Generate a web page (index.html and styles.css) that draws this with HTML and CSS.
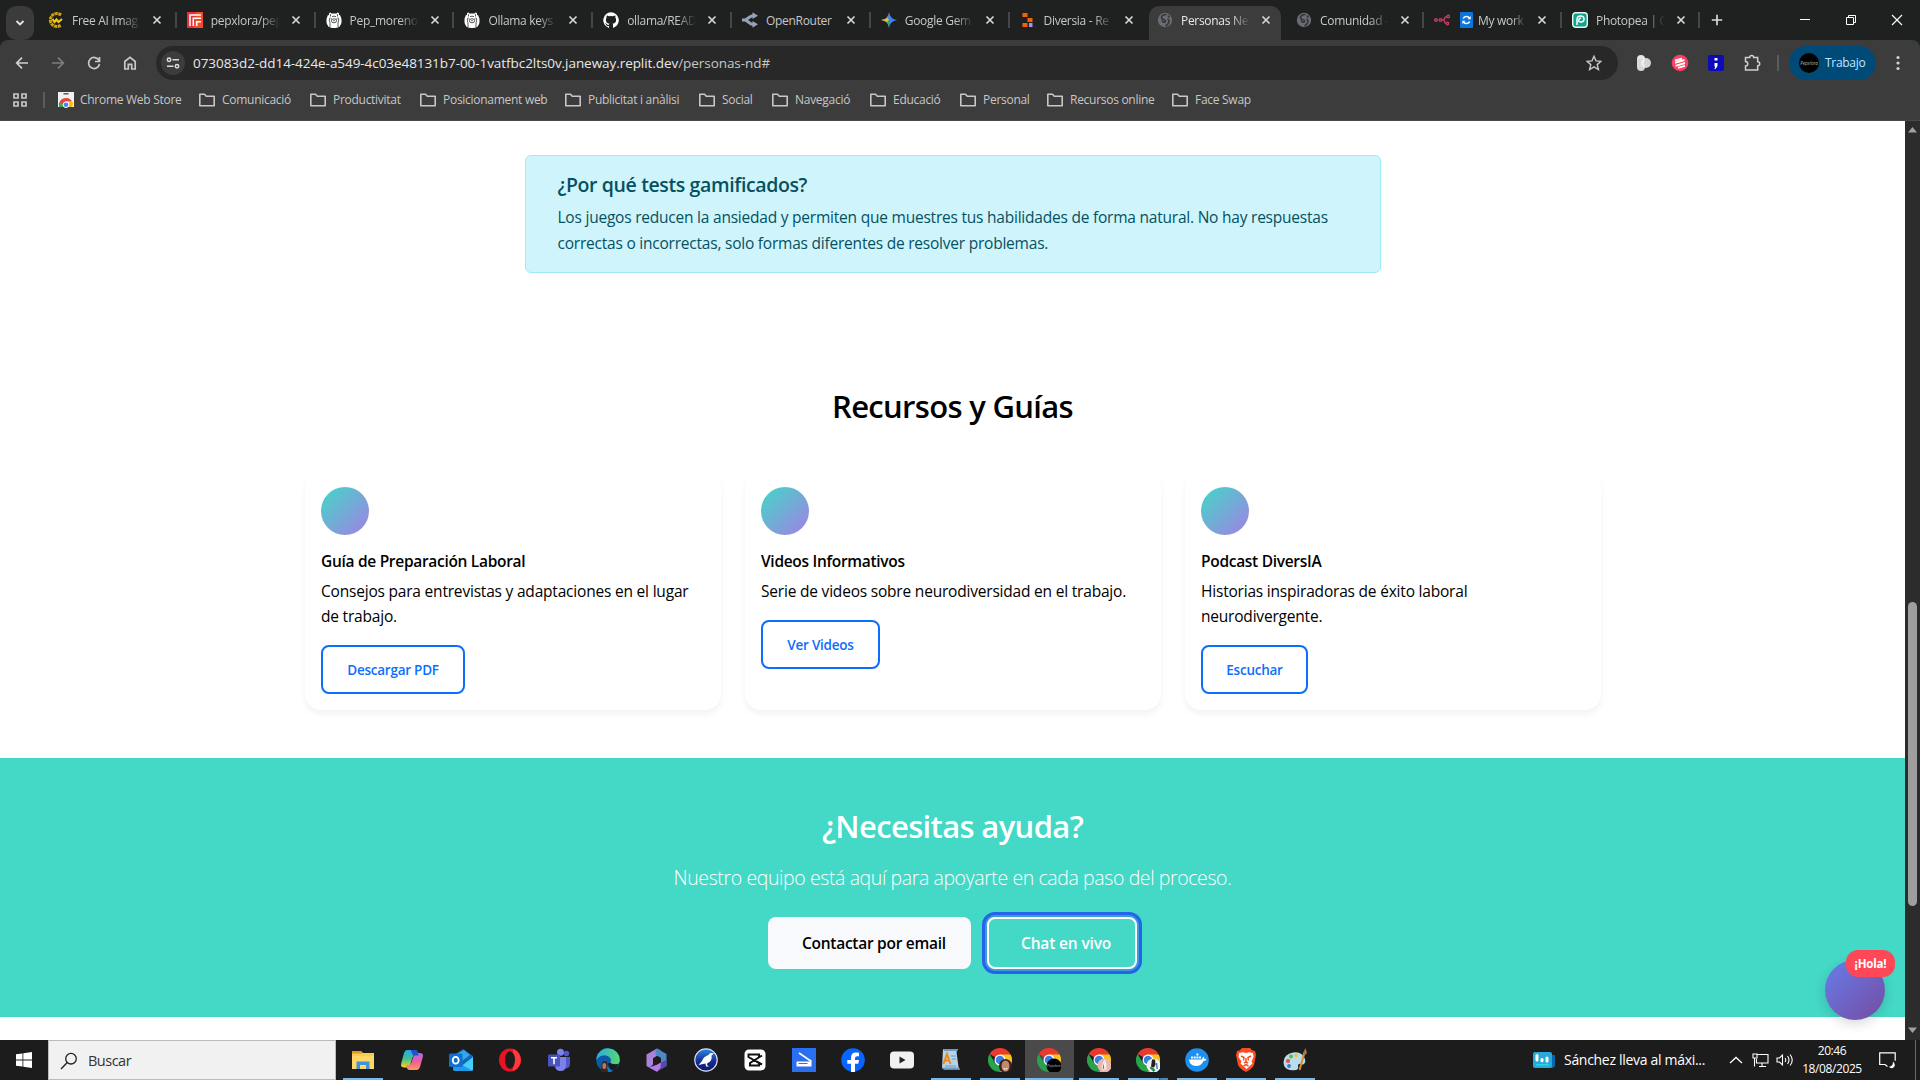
FILE: index.html
```html
<!DOCTYPE html>
<html lang="es">
<head>
<meta charset="utf-8">
<title>Personas Neurodivergentes</title>
<link rel="stylesheet" href="styles.css">
</head>
<body>
<svg class="defs" width="0" height="0" aria-hidden="true">
  <defs>
    <linearGradient id="cop" x1="0" y1="0" x2="0" y2="1"><stop offset="0" stop-color="#28a8f4"/><stop offset=".5" stop-color="#3fc28a"/><stop offset="1" stop-color="#ffd02d"/></linearGradient>
    <linearGradient id="cop2" x1="0" y1="0" x2="0" y2="1"><stop offset="0" stop-color="#a86bf0"/><stop offset=".5" stop-color="#ee5c9a"/><stop offset="1" stop-color="#ff9a5a"/></linearGradient>
    <linearGradient id="edge" x1="0" y1="0" x2="1" y2="0"><stop offset="0" stop-color="#2aa9e8"/><stop offset="1" stop-color="#57d96b"/></linearGradient>
    <linearGradient id="bird" x1="0" y1="0" x2="0" y2="1"><stop offset="0" stop-color="#2f86e0"/><stop offset=".6" stop-color="#14288f"/><stop offset="1" stop-color="#0d1c70"/></linearGradient>
    <linearGradient id="photo" x1="0" y1="0" x2="1" y2="1"><stop offset="0" stop-color="#ea4335"/><stop offset=".4" stop-color="#4285f4"/><stop offset="1" stop-color="#3a7cf0"/></linearGradient>
  </defs>
  <symbol id="x" viewBox="0 0 16 16"><path d="M4.500 4.500l7 7M11.500 4.500l-7 7" stroke="#d5d7d6" stroke-width="1.700" fill="none"/></symbol>
  <symbol id="folder" viewBox="0 0 18 16"><path d="M1.800 2.300h4.700l1.800 2h7.900v9.400H1.800z" fill="none" stroke="#c7c7c7" stroke-width="1.600" stroke-linejoin="round"/></symbol>
  <symbol id="globe" viewBox="0 0 16 16"><circle cx="8" cy="8" r="7.200" fill="#696c73"/><path d="M9.500 2.500c-3 0-5 1.500-5 3.500s4 1 4 3-3 1-3.500-.5M10.500 7c2 1 2 3 0 5.500L8.500 14M11 3.500l1.500 2" stroke="#35373b" stroke-width="1.700" fill="none"/></symbol>
  <symbol id="llama" viewBox="0 0 16 16"><rect x=".5" y="1.500" width="15" height="14.500" rx="6" fill="#fff"/><path d="M3 5V1.500Q4.500-.8 6 2.500h4q1.500-3.300 3-1V5" fill="#fff"/><path d="M4.500 4.500V2.200M11.500 4.500V2.200M4 5.500Q2.500 8 4 11v4M12 5.500q1.500 2.500 0 5.500v4M6 4.700q2-1 4 0" stroke="#333" stroke-width=".8" fill="none"/><ellipse cx="8" cy="8.800" rx="2.600" ry="2" fill="none" stroke="#333" stroke-width=".8"/><path d="M4.700 7h1M10.300 7h1M7.400 8.700h1.200" stroke="#222" stroke-width="1"/></symbol>
  <symbol id="chrome" viewBox="0 0 24 24"><path d="M12 12L1.600 6A12 12 0 0 1 22.400 6z" fill="#ea3a2e"/><path d="M12 12v12A12 12 0 0 1 1.600 6l5.500 9z" fill="#2aa24c"/><path d="M12 12L7 15l5 9z" fill="#2aa24c"/><path d="M12 6.500h10.700A12 12 0 0 1 12 24l4.800-9.200z" fill="#fcc31e"/><circle cx="12" cy="12" r="5.500" fill="#fff"/><circle cx="12" cy="12" r="4.300" fill="#3b7de8"/></symbol>
</svg>

<header class="browser">
  <div class="tabs">
    <button class="tab-search"><svg width="10" height="10" viewBox="0 0 10 10"><path d="M1.500 3l3.500 3.500L8.500 3" fill="none" stroke="#e4e4e4" stroke-width="1.900"/></svg></button>
    <div class="tab"><svg class="fav" viewBox="0 0 16 16"><path d="M13 3A6.500 6.500 0 1 0 13 13" fill="none" stroke="#cfa10d" stroke-width="3" stroke-dasharray="3 .6"/><path d="M4.500 7l2 3 2-2.500 2 2.500 3.500-3" fill="none" stroke="#f5c417" stroke-width="2.200"/></svg><span class="title">Free AI Imag</span><svg class="close"><use href="#x"/></svg></div>
    <div class="tab"><svg class="fav" viewBox="0 0 16 16"><path d="M0 0h16v16H0z" fill="#ee2f38"/><path d="M9 0h7v16H7z" fill="#f75b25" opacity=".65"/><path d="M3 14V3h11M6.300 14V6.300H14M9.700 14V9.700H14" fill="none" stroke="#fff" stroke-width="1.500"/></svg><span class="title">pepxlora/pep</span><svg class="close"><use href="#x"/></svg></div>
    <div class="tab"><svg class="fav"><use href="#llama"/></svg><span class="title">Pep_moreno/</span><svg class="close"><use href="#x"/></svg></div>
    <div class="tab"><svg class="fav"><use href="#llama"/></svg><span class="title">Ollama keys ·</span><svg class="close"><use href="#x"/></svg></div>
    <div class="tab"><svg class="fav" viewBox="0 0 16 16"><path fill="#fff" d="M8 .3a8 8 0 0 0-2.500 15.500c.4.100.5-.2.500-.4v-1.500c-2.200.5-2.700-1-2.700-1-.4-.9-.9-1.200-.9-1.200-.7-.5.100-.5.100-.5.800.100 1.200.8 1.200.8.700 1.200 1.900.9 2.300.7.100-.5.300-.9.500-1.100-1.800-.2-3.600-.9-3.600-3.900 0-.9.300-1.600.8-2.100-.1-.2-.4-1 .1-2.100 0 0 .7-.2 2.200.8a7.700 7.700 0 0 1 4 0c1.500-1 2.200-.8 2.200-.8.400 1.100.2 1.900.1 2.100.5.600.8 1.300.8 2.100 0 3.100-1.900 3.700-3.600 3.900.3.300.5.800.5 1.500v2.300c0 .2.100.5.600.4A8 8 0 0 0 8 .3z"/></svg><span class="title">ollama/READ</span><svg class="close"><use href="#x"/></svg></div>
    <div class="tab"><svg class="fav" viewBox="0 0 16 16"><path d="M0 8h2.500C6 8 7 3.700 11 3.700M2.500 8C6 8 7 12.300 11 12.300" fill="none" stroke="#94a3b8" stroke-width="3"/><path d="M10.500.3l5.500 3.400-5.500 3.400zM10.500 8.900l5.500 3.400-5.500 3.400z" fill="#94a3b8"/></svg><span class="title solid">OpenRouter</span><svg class="close"><use href="#x"/></svg></div>
    <div class="tab"><svg class="fav" viewBox="0 0 16 16"><path d="M8 0Q9 7 16 8 9 9 8 16 7 9 0 8 7 7 8 0z" fill="url(#photo)"/><path d="M0 8q5-.7 6.500-2.500L8 8l-1.500 2.500Q5 8.700 0 8z" fill="#f6bd18"/><path d="M8 16q-.5-4-2-5.800L8 8z" fill="#2fae58"/></svg><span class="title">Google Gem</span><svg class="close"><use href="#x"/></svg></div>
    <div class="tab no-sep"><svg class="fav" viewBox="0 0 16 16"><path d="M2.500 1h5v4h-5zM2.500 11h5v4h-5zM7.500 6h5v4h-5z" fill="#f26207"/><path d="M9 11h3.500v4H9z" fill="#b18cf5"/></svg><span class="title">Diversia - Re</span><svg class="close"><use href="#x"/></svg></div>
    <div class="tab active no-sep"><svg class="fav"><use href="#globe"/></svg><span class="title">Personas Ne</span><svg class="close"><use href="#x"/></svg></div>
    <div class="tab late"><svg class="fav"><use href="#globe"/></svg><span class="title">Comunidad -</span><svg class="close"><use href="#x"/></svg></div>
    <div class="tab late two-fav"><svg class="fav" viewBox="0 0 16 16"><g fill="none" stroke="#c23b5e" stroke-width="1.400"><circle cx="2" cy="8" r="1.300"/><circle cx="6.500" cy="8" r="1.300"/><path d="M8 8h2q1-3.500 3-3.500M10 8q1 3.500 2 3.500"/><circle cx="14.200" cy="4.500" r="1.200"/><circle cx="13.500" cy="11.500" r="1.200"/></g></svg><svg class="fav" viewBox="0 0 16 16"><rect width="13" height="16" x="2" rx="1" fill="#0b74dd"/><path d="M5.200 6.500A3.700 3.700 0 0 1 11.500 6M11.800 9.500A3.700 3.700 0 0 1 5.500 10" fill="none" stroke="#fff" stroke-width="1.600"/><path d="M12.700 4v3.300H9.500zM4.300 12V8.700h3.200z" fill="#fff"/></svg><span class="title">My work</span><svg class="close"><use href="#x"/></svg></div>
    <div class="tab late"><svg class="fav" viewBox="0 0 16 16"><rect x=".7" y=".7" width="14.600" height="14.600" rx="3" fill="#0fa58c" stroke="#e9f5f2" stroke-width="1.400"/><path d="M5 13V7.500Q5 4 8.500 4T12 7t-3 3-2.200-2.200T9 6.500" fill="none" stroke="#fff" stroke-width="1.500"/></svg><span class="title">Photopea | C</span><svg class="close"><use href="#x"/></svg></div>
    <svg class="new-tab" viewBox="0 0 16 16"><path d="M8 2.800v10.400M2.800 8h10.400" stroke="#d8dad9" stroke-width="1.700"/></svg>
    <div class="window-buttons">
      <svg viewBox="0 0 12 12"><path d="M1 5.500h10" stroke="#fff"/></svg>
      <svg viewBox="0 0 12 12"><path d="M1.500 3.500h7v7h-7zM3.500 3V1.500h7v7H9" fill="none" stroke="#fff"/></svg>
      <svg viewBox="0 0 12 12"><path d="M1 1l10 10M11 1L1 11" stroke="#fff" stroke-width="1.100"/></svg>
    </div>
  </div>
  <div class="toolbar">
    <div class="nav">
      <svg viewBox="0 0 16 16"><path d="M14 8H3M8 2.700L2.700 8 8 13.300" stroke="#d0d0d0"/></svg>
      <svg viewBox="0 0 16 16"><path d="M2 8h11M8 2.700L13.300 8 8 13.300" stroke="#7d7d7d"/></svg>
      <svg viewBox="0 0 16 16"><path d="M13 5.500A5.500 5.500 0 1 0 13.500 9M13.500 2v4.500H9" stroke="#c8c8c8"/></svg>
      <svg viewBox="0 0 16 16"><path d="M2.800 14V6.500L8 2.300l5.200 4.200V14H9.700V9.300H6.300V14z" stroke="#c8c8c8"/></svg>
    </div>
    <div class="omnibox">
      <span class="site"><svg width="14" height="14" viewBox="0 0 14 14"><g fill="none" stroke="#dcdcdc" stroke-width="1.500"><circle cx="3" cy="3.700" r="1.700"/><path d="M6.500 3.700H13M1 10.300h6.500"/><circle cx="11" cy="10.300" r="1.700"/></g></svg></span>
      <span class="url">073083d2-dd14-424e-a549-4c03e48131b7-00-1vatfbc2lts0v.janeway.replit.dev<i>/personas-nd#</i></span>
      <svg class="star" viewBox="0 0 16 16"><path d="M8 1.300l2 4.600 5 .4-3.800 3.300 1.200 4.900L8 11.900l-4.400 2.600 1.200-4.900L1 6.300l5-.4z" fill="none" stroke="#c8c8c8" stroke-width="1.400"/></svg>
    </div>
    <div class="extensions">
      <svg viewBox="0 0 18 18"><circle cx="6" cy="5" r="4" fill="#e6e6e6"/><circle cx="6" cy="13" r="4" fill="#d5d5d5"/><path d="M2 5h7v8H2z" fill="#dadada"/><circle cx="11" cy="9" r="5" fill="#efefef" opacity=".85"/></svg>
      <svg viewBox="0 0 18 18"><circle cx="9" cy="9" r="8.300" fill="#fb3f61"/><path d="M4 6.500l7-1.800M4 8.800L13.500 6M4.500 11.800L14 9M7 13.800l7-2" stroke="#fff" stroke-width="1.900"/></svg>
      <svg viewBox="0 0 18 18"><rect x="1" y="1" width="16" height="16" rx="2" fill="#0b0bba"/><path d="M7.500 4h3v2.500h-3zM7.500 9h3v3l-2 3h-1l.7-2.500h-.7z" fill="#fff"/></svg>
      <svg viewBox="0 0 18 18"><path d="M2.500 3.500h4.200a2 2 0 0 1 4 0h4v4.200a2 2 0 0 1 0 4v4.300H2.500v-4a2.200 2.200 0 0 0 0-4.500z" fill="none" stroke="#d0d0d0" stroke-width="1.500"/></svg>
    </div>
    <span class="bar"></span>
    <div class="profile"><span class="avatar">Pepxlora</span>Trabajo</div>
    <svg class="menu" viewBox="0 0 4 16"><g fill="#d2d2d2"><circle cx="2" cy="2.500" r="1.600"/><circle cx="2" cy="8" r="1.600"/><circle cx="2" cy="13.500" r="1.600"/></g></svg>
  </div>
  <nav class="bookmarks">
    <svg class="apps" viewBox="0 0 14 14"><path d="M1 1h4v4H1zM9 1h4v4H9zM1 9h4v4H1zM9 9h4v4H9z" fill="none" stroke="#c7c7c7" stroke-width="1.700"/></svg>
    <span class="bar"></span>
    <a class="store"><svg viewBox="0 0 16 16"><path d="M0 0h16v15H0z" fill="#f1f1f1"/><path d="M5.500 1.800h5" stroke="#444" stroke-width="1.300"/><path d="M1.500 15a6.500 6.500 0 0 1 1-6.500 7 7 0 0 1 11.500 1H8z" fill="#ea4335"/><path d="M1 15l1.500-5L6 15z" fill="#34a853"/><path d="M10 15l1-5h4l-.5 5z" fill="#fbbc04"/><circle cx="8" cy="12.700" r="2.800" fill="#4285f4" stroke="#fff"/></svg>Chrome Web Store</a>
    <a><svg><use href="#folder"/></svg>Comunicació</a>
    <a><svg><use href="#folder"/></svg>Productivitat</a>
    <a><svg><use href="#folder"/></svg>Posicionament web</a>
    <a><svg><use href="#folder"/></svg>Publicitat i anàlisi</a>
    <a><svg><use href="#folder"/></svg>Social</a>
    <a><svg><use href="#folder"/></svg>Navegació</a>
    <a><svg><use href="#folder"/></svg>Educació</a>
    <a><svg><use href="#folder"/></svg>Personal</a>
    <a><svg><use href="#folder"/></svg>Recursos online</a>
    <a><svg><use href="#folder"/></svg>Face Swap</a>
  </nav>
</header>

<div class="viewport">
  <main>
    <section class="alert">
      <h5>¿Por qué tests gamificados?</h5>
      <p>Los juegos reducen la ansiedad y permiten que muestres tus habilidades de forma natural. No hay respuestas<br>correctas o incorrectas, solo formas diferentes de resolver problemas.</p>
    </section>
    <h2 class="heading">Recursos y Guías</h2>
    <section class="cards">
      <article class="card"><span class="dot"></span><h6>Guía de Preparación Laboral</h6><p>Consejos para entrevistas y adaptaciones en el lugar<br>de trabajo.</p><a class="btn pdf">Descargar PDF</a></article>
      <article class="card"><span class="dot"></span><h6>Videos Informativos</h6><p>Serie de videos sobre neurodiversidad en el trabajo.</p><a class="btn videos">Ver Videos</a></article>
      <article class="card"><span class="dot"></span><h6>Podcast DiversIA</h6><p>Historias inspiradoras de éxito laboral<br>neurodivergente.</p><a class="btn listen">Escuchar</a></article>
    </section>
    <section class="help">
      <h2>¿Necesitas ayuda?</h2>
      <p>Nuestro equipo está aquí para apoyarte en cada paso del proceso.</p>
      <div class="actions"><a class="email">Contactar por email</a><a class="chat">Chat en vivo</a></div>
    </section>
    <div class="bubble"><span>¡Hola!</span></div>
  </main>
  <aside class="scrollbar">
    <svg width="9" height="6" viewBox="0 0 9 6"><path d="M0 5.500L4.500 0 9 5.500z" fill="#a0a0a0"/></svg>
    <span class="thumb"></span>
    <svg width="9" height="6" viewBox="0 0 9 6"><path d="M0 .5L4.500 6 9 .5z" fill="#a0a0a0"/></svg>
  </aside>
</div>

<footer class="taskbar">
  <div class="start"><svg width="16" height="16" viewBox="0 0 16 16"><path d="M0 2.300L6.500 1.400v6.200H0zM7.300 1.300L16 0v7.600H7.300zM0 8.400h6.500v6.200L0 13.700zM7.300 8.400H16V16l-8.700-1.300z" fill="#fff"/></svg></div>
  <div class="search"><svg width="18" height="18" viewBox="0 0 18 18"><circle cx="11" cy="6.700" r="5.300" fill="none" stroke="#222" stroke-width="1.300"/><path d="M7.300 10.600L1 17" stroke="#222" stroke-width="1.400"/></svg>Buscar</div>
  <div class="apps-row">
    <div class="app run"><svg viewBox="0 0 24 24"><path d="M1 3h9l2 2h11v16H1z" fill="#f7cc55"/><path d="M1 3h9l1.500 2.500H1z" fill="#dc9a17"/><path d="M1 8h22v13H1z" fill="#ffd767"/><path d="M5.500 21v-7.500h13V21H15v-4H9v4z" fill="#3f93d6"/></svg></div>
    <div class="app"><svg viewBox="0 0 24 24"><path d="M7 2h8q2 0 2.500 2l1 3.500h-3.500q-2 0-2.500 2l-2.300 7.500q-.7 2.500-3 2.500H4.500q-4.500 0-3.300-4L4 5q1-3 3-3z" fill="url(#cop)"/><path d="M17 22H9.500q-2 0-2.500-2l-.8-3h2.500q2 0 2.600-2L13.800 7.500q.7-2.500 3-2.500h2.700q4.500 0 3.300 4L20 19q-1 3-3 3z" fill="url(#cop2)"/><path d="M10.500 2H15q2 0 2.500 2l1 3.500h-3q-1.500 0-2 .8z" fill="#2052cb"/></svg></div>
    <div class="app"><svg viewBox="0 0 24 24"><path d="M4 8l10-7 10 7v13q0 2-2 2H6q-2 0-2-2z" fill="#1066b8"/><path d="M7 6l8-4 6 5-8 6z" fill="#34a7ec"/><path d="M24 9v12q0 2-2 2H6z" fill="#45cff5"/><path d="M4 12l20 11H6q-2 0-2-2z" fill="#2298e6"/><rect y="5.500" width="13.500" height="13.500" rx="1.500" fill="#0f70cf"/><ellipse cx="6.700" cy="12.200" rx="3" ry="3.400" fill="none" stroke="#fff" stroke-width="1.800"/></svg></div>
    <div class="app"><svg viewBox="0 0 24 24"><ellipse cx="12" cy="12" rx="11" ry="11.500" fill="#e81224"/><path d="M15 1a11 11.500 0 0 1 0 22z" fill="#ff3a3d"/><ellipse cx="12" cy="12" rx="5" ry="8.700" fill="#1c1c1c"/></svg></div>
    <div class="app"><svg viewBox="0 0 24 24"><circle cx="19.500" cy="5.500" r="2.700" fill="#5059c9"/><circle cx="13.500" cy="4.200" r="3.500" fill="#7b83eb"/><path d="M15 9h8v7q0 4-4.500 4.500H15z" fill="#5059c9"/><path d="M8 9h11v8q0 6-5.500 6T8 17z" fill="#7b83eb"/><rect x="1" y="6.500" width="12" height="12" rx="1.300" fill="#4b53bc"/><path d="M4 9.700h6M7 9.700v6.500" stroke="#fff" stroke-width="1.600"/></svg></div>
    <div class="app"><svg viewBox="0 0 24 24"><circle cx="12" cy="12" r="11.800" fill="#0c5aa6"/><path d="M.4 10A11.800 11.800 0 0 1 23.800 12q0 4.500-5 4.500-4.500 0-4.800-2 2-2 .2-4.500Q11 6 5 8 2 9 .4 12z" fill="url(#edge)"/><path d="M14 14.500q1.500 2.500 8.500 1.500-2 5-5 6.500-5-1-5.500-7z" fill="#1c1c1c"/><path d="M12 10q-5 3 0 9 2 3 5 4-3 1.500-7 .5Q5 20 8 13z" fill="#1479cc"/><path d="M5 24q0-5 1-9 2-3.500 5-1.500 1 4 0 6.500 1 2 1 4z" fill="#3b2520"/><ellipse cx="8.300" cy="18" rx="1.900" ry="3" fill="#b77b67"/></svg></div>
    <div class="app"><svg viewBox="0 0 24 24"><path d="M12 .5l4 2.300-4 5-4 2.500v6.200l-3.500 3.300L1.500 18V6.500z" fill="#a983d8"/><path d="M12 .5l9.500 5.500v12l-5.500 3V10l-5-3q-1.500-3 1-6.500z" fill="#4f86c8"/><path d="M21.500 12v6L12 23.700l-8-4.300 8-2.700 4-2.300z" fill="#5b45ae"/><path d="M4 19.400l8-2.700 4-2.300-.5 5.300-3.500 4z" fill="#b77ce0"/></svg></div>
    <div class="app"><svg viewBox="0 0 24 24"><circle cx="12" cy="12" r="11.200" fill="url(#bird)" stroke="#d9e1f3" stroke-width="1.200"/><path d="M20 5.500l-2.500 2q1 6-4 7.500l-.5 2 2 1.500h-3l-.5-3-7 1.500 3.500-4q1.500-4.500 6.500-6 1-3 5.500-1.500z" fill="#fff"/></svg></div>
    <div class="app"><svg viewBox="0 0 24 24"><rect x="1.500" y="1.500" width="21" height="21" rx="4.500" fill="#fff"/><path d="M19 7.500L7 15v2.500h9V15L5.500 9V6.500H16v2.700M19 16.500l-5.500-3" fill="none" stroke="#111" stroke-width="2"/></svg></div>
    <div class="app"><svg viewBox="0 0 24 24"><path d="M0 0h24v24H0z" fill="#2b6fee"/><path d="M7 5l12.500 8.500" fill="none" stroke="#fff" stroke-width="1.600"/><path d="M4.500 13.500h15v5h-15z" fill="#fff"/><path d="M6.500 15.500h9" stroke="#2b6fee" stroke-width="1"/></svg></div>
    <div class="app"><svg viewBox="0 0 24 24"><circle cx="12" cy="12" r="11.800" fill="#0866ff"/><path d="M10 24v-8.300H6.300V12H10V9.800q0-5.200 5-5.200l3 .2v3.400h-1.900q-2.100 0-2.100 2V12h4l-.7 3.700H14V24z" fill="#fff"/></svg></div>
    <div class="app"><svg viewBox="0 0 24 24"><rect y="3.500" width="24" height="17" rx="4" fill="#f1f1f1"/><path d="M9.500 8.500l6 3.500-6 3.500z" fill="#222"/></svg></div>
    <div class="app run"><svg viewBox="0 0 24 24"><path d="M4 1h15l-1.500 3 2 15 1.500 2.500H5L3 20z" fill="#b5d4ea"/><path d="M4 1h15l-1 2H5zM3 19.500h16l2 2H5z" fill="#6e9dc4"/><path d="M4.500 16L8 6l3.500 10M5.500 12.500h5" fill="none" stroke="#ef8a17" stroke-width="2"/><path d="M12 8h5M13 11h4M6 18h11" stroke="#7098b8"/></svg></div>
    <div class="app run"><svg viewBox="0 0 24 24"><use href="#chrome"/><ellipse cx="17.500" cy="18" rx="6.500" ry="7" fill="#3c211a"/><ellipse cx="17.500" cy="18" rx="4" ry="5.500" fill="#c18a6d"/><path d="M15.500 20.500q2 1.500 4 0" stroke="#fff" fill="none"/></svg></div>
    <div class="app run current"><svg viewBox="0 0 24 24"><use href="#chrome"/><circle cx="17" cy="18" r="7.500" fill="#000"/></svg><small>Pepxlora</small></div>
    <div class="app run"><svg viewBox="0 0 24 24"><use href="#chrome"/><circle cx="17.500" cy="17.500" r="7" fill="#e8b7ad"/><path d="M15 21l2-8 1-1-1 10zM19 22l-.5-8" fill="#5c3c3c" stroke="#fff"/></svg></div>
    <div class="app run stacked"><svg viewBox="0 0 24 24"><use href="#chrome"/><circle cx="17.500" cy="17.500" r="7" fill="#eef1f2"/><path d="M16 11.500h3l.5 5-1.500 3-3-1z" fill="#261d1c"/><path d="M14.500 19l4 4" stroke="#238a45" stroke-width="2.500"/><path d="M20.500 15l.7 6" stroke="#4380d4" stroke-width="1.500"/></svg></div>
    <div class="app run"><svg viewBox="0 0 24 24"><circle cx="12" cy="12" r="11.800" fill="#1d8fee"/><path d="M4 11.500h13q.5-2 1.500-3 1 1 1 2.500h2q-.5 1.800-3 2-2 5-7.500 5-6.500 0-7-6.500zM6 8.500h2v2H6zM8.700 8.500h2v2h-2zM11.400 8.500h2v2h-2zM11.400 5.500h2v2h-2zM14.100 8.500h2v2h-2z" fill="#fff"/></svg></div>
    <div class="app run"><svg viewBox="0 0 24 24"><path d="M8 0h8l2.500 2.500L21 3l1 4-2 10q-2 4-8 7-6-3-8-7L2 7l1-4 2.500-.5z" fill="#fb4b20"/><path d="M5 5l4-.7 3 .8 3-.8 4 .7.500 4-2 4.500 1 2-6 5.500-6-5.500 1-2L4.500 9z" fill="#fff"/><path d="M7 8l3 1.500-.5 3M17 8l-3 1.500.5 3M12 10v4l-2 1M12 14l2 1M9.500 18l2.500-1.500 2.500 1.500" fill="none" stroke="#fb4b20" stroke-width="1.500"/></svg></div>
    <div class="app run"><svg viewBox="0 0 24 24"><path d="M.5 14Q1 6 10 4.500T22 11q1 3-1 5-2 1-3 0-3-1-3 2 1 3-2 4-5 1-9-1Q.5 19 .5 14z" fill="#b9dcec"/><circle cx="5" cy="13" r="2" fill="#e74c3c"/><circle cx="8" cy="8.500" r="2" fill="#5cb85c"/><circle cx="13" cy="7.500" r="1.800" fill="#f2c230"/><circle cx="6" cy="18" r="1.900" fill="#3677c9"/><path d="M21.500 4.500L16.500 22" stroke="#db8b2b" stroke-width="2"/><path d="M20 5l2.500-5 1.500 5-2 2z" fill="#a5774d"/></svg></div>
  </div>
  <div class="tray">
    <svg class="news" viewBox="0 0 22 17"><path d="M17 3h5v11l-2 2h-4z" fill="#0968ad"/><rect y="0" width="19" height="16" rx="2" fill="#28a9d8"/><path d="M4 3.500V8M9 7.500v1.200M14 6v3" stroke="#fff" stroke-width="3" stroke-linecap="round"/><path d="M3 12.700h13" stroke="#18ddf0" stroke-width="1.600"/></svg>
    <span class="headline">Sánchez lleva al máxi...</span>
    <svg class="up" viewBox="0 0 14 8"><path d="M1 7l6-5.500L13 7" fill="none" stroke="#fff" stroke-width="1.300"/></svg>
    <svg class="net" viewBox="0 0 17 14"><path d="M5 1.500h11v8.500H4.500V6M1 1h4v4H1zM2.500 5v8.500M10 10v3M7 13.500h7" fill="none" stroke="#fff" stroke-width="1.100"/></svg>
    <svg class="vol" viewBox="0 0 18 14"><path d="M1 5h2.500L6.500 2v10l-3-3H1zM9 5q1.500 2 0 4M11.500 3q3 4 0 8M14 1.500q4.500 5.500 0 11" fill="none" stroke="#fff" stroke-width="1.100"/></svg>
    <div class="clock">20:46<br>18/08/2025</div>
    <svg class="note" viewBox="0 0 17 17"><path d="M8.500 14.500L6 12.500H.7V.8h15.500v8" fill="none" stroke="#fff" stroke-width="1.200"/><path d="M14 9.500q3 3 1 5.500-3 2.500-5-.3 4 0 4-5.200z" fill="#fff"/></svg>
    <span class="peek"></span>
  </div>
</footer>
</body>
</html>
```
FILE: styles.css
```css
* { box-sizing: border-box; }
body { margin: 0; width: 1920px; height: 1080px; overflow: hidden; display: flex; flex-direction: column; font-family: "Open Sans", "Noto Sans", sans-serif; font-size: 15.500px; line-height: 25.600px; color: #000; background: #fff; }
h2, h5, h6, p { margin: 0; }
svg { display: block; flex: none; }
.defs { position: absolute; }

/* browser frame */
.browser { height: 121px; background: #3c3c3c; border-bottom: 1px solid #4a4a4a; color: #c7c7c7; font-size: 12px; line-height: 16px; white-space: nowrap; }
.tabs { height: 49px; display: flex; align-items: flex-start; background: #1f2120; padding: 6px 0 0 6px; }
.tab-search { width: 28px; height: 34px; margin-right: 4px; padding: 0; border: 0; border-radius: 10px; background: #3b3b3b; display: grid; place-items: center; flex: none; }
.tab { flex: none; width: 138.800px; height: 34px; padding: 6px 0 0 10px; display: flex; align-items: flex-start; background: linear-gradient(#454746, #454746) 100% 6px / 2px 16px no-repeat; }
.no-sep { background: none; }
.late { width: 138px; }
.fav { width: 16px; height: 16px; }
.title { width: 69px; margin-left: 8px; padding-top: 1px; font-size: 12px; letter-spacing: -.3px; -webkit-mask-image: linear-gradient(90deg, #000 72%, transparent); mask-image: linear-gradient(90deg, #000 72%, transparent); }
.solid { -webkit-mask-image: none; mask-image: none; }
.close { width: 16px; height: 16px; margin-left: 8px; }
.active { height: 43px; background: #3c3c3c; border-radius: 10px 10px 0 0; color: #e8e8e8; width: 132px; padding-left: 8px; margin: 0 5px 0 .6px; }
.two-fav .title { width: 48px; margin-left: 4px; }
.two-fav .fav + .fav { margin-left: 8px; }
.new-tab { width: 16px; height: 16px; margin: 6px 0 0 9px; }
.window-buttons { flex: 1; display: flex; justify-content: flex-end; gap: 34px; padding: 8px 17px 0 0; }
.window-buttons svg { width: 12px; height: 12px; }
.toolbar { height: 34px; margin-top: -3px; display: flex; align-items: center; position: relative; background: #3c3c3c; border-radius: 8px 8px 0 0; margin-top: -9px; height: 46px; padding-top: 0; margin-bottom: -6px; }
.nav { display: flex; gap: 20px; padding-left: 14px; width: 156px; }
.nav svg { width: 16px; height: 16px; fill: none; stroke-width: 1.700; }
.omnibox { width: 1462px; height: 34px; border-radius: 17px; background: #282828; display: flex; align-items: center; padding: 0 16px 0 5px; }
.site { width: 24px; height: 24px; border-radius: 50%; background: #3c3c3c; display: grid; place-items: center; }
.url { flex: 1; margin-left: 8px; font-size: 13.500px; letter-spacing: -.06px; color: #e8e8e8; }
.url i { font-style: normal; color: #c7c7c7; }
.star { width: 16px; height: 16px; }
.extensions { display: flex; gap: 18px; margin-left: 17px; }
.extensions svg { width: 18px; height: 18px; }
.bar { width: 2px; height: 16px; background: #5c5c5c; }
.toolbar .bar { margin: 0 10px 0 16px; }
.profile { width: 87px; height: 34px; border-radius: 17px; background: #004a77; color: #c2e7ff; display: flex; align-items: center; padding-left: 10px; gap: 6px; letter-spacing: -.3px; }
.avatar { width: 20px; height: 20px; border-radius: 50%; background: #000; color: #bbb; font: italic 4.500px/20px "Open Sans", sans-serif; text-align: center; letter-spacing: 0; }
.menu { width: 4px; height: 16px; margin-left: 20px; }
.bookmarks { height: 40px; display: grid; grid-template-columns: 30px 15px 140px 111px 110px 145px 134px 73px 98px 90px 87px 125px 100px; align-items: center; padding-left: 13px; letter-spacing: -.28px; }
.bookmarks a { display: flex; align-items: center; gap: 6px; }
.bookmarks a svg { width: 18px; height: 16px; }
.bookmarks .store svg { width: 16px; }
.apps { width: 14px; height: 14px; }

/* page */
.viewport { height: 919px; display: flex; }
main { width: 1905px; padding-top: 34px; background: #fff; position: relative; }
.alert { width: 856px; height: 118px; margin: 0 auto; padding: 17px 32px 15px; background: #cff4fc; border: 1px solid #9eeaf9; border-radius: 6px; color: #055160; white-space: nowrap; letter-spacing: -.22px; }
.alert h5 { font-size: 19.500px; line-height: 24px; font-weight: 600; margin-bottom: 8px; letter-spacing: -.38px; }
.heading { margin-top: 114px; text-align: center; font-size: 31px; line-height: 38px; font-weight: 600; letter-spacing: -.68px; }
.cards { display: flex; gap: 24px; margin: 46px 0 48px 305px; }
.card { width: 416px; height: 239px; padding: 16px; border-radius: 16px; background: #fff; box-shadow: 0 4px 6px rgba(0,0,0,.05); display: flex; flex-direction: column; align-items: flex-start; white-space: nowrap; }
.dot { width: 48px; height: 48px; border-radius: 50%; background: linear-gradient(135deg, #40d9c6, #a37fe6); margin-bottom: 17px; }
.card h6 { font-size: 15.500px; line-height: 19px; font-weight: 600; margin-bottom: 8px; letter-spacing: -.3px; }
.card p { margin-bottom: 15px; letter-spacing: -.2px; }
.btn { height: 49px; border: 2px solid #0d6efd; border-radius: 8px; color: #0d6efd; font-size: 13.500px; font-weight: 600; line-height: 46px; text-align: center; letter-spacing: -.24px; }
.pdf { width: 144px; }
.videos { width: 119px; }
.listen { width: 107px; }
.help { height: 259px; padding-top: 49px; background: #44d8c6; color: #fff; display: flex; flex-direction: column; align-items: center; white-space: nowrap; }
.help h2 { font-size: 31px; line-height: 38px; font-weight: 600; margin-bottom: 17px; letter-spacing: -.65px; }
.help p { font-size: 19.500px; line-height: 32px; font-weight: 300; margin-bottom: 23px; letter-spacing: -.4px; }
.actions { display: flex; gap: 16px; font-weight: 600; line-height: 53px; letter-spacing: -.27px; }
.email { width: 203px; height: 52px; padding-left: 34px; border-radius: 8px; background: #f8f9fc; color: #000; }
.chat { width: 150px; height: 52px; line-height: 49px; padding-left: 32px; border: 2px solid #fff; border-radius: 8px; box-shadow: 0 0 0 2px #389ed8, 0 0 0 5px #2563eb; letter-spacing: -.15px; }
.bubble { position: absolute; left: 1825px; top: 839px; width: 60px; height: 60px; border-radius: 50%; background: linear-gradient(135deg, #667eea, #764ba2); box-shadow: 0 4px 12px rgba(0,0,0,.15); }
.bubble span { position: absolute; left: 21px; top: -10px; width: 49px; height: 27px; border-radius: 12px; background: #ff4757; color: #fff; font-size: 11.500px; font-weight: 700; line-height: 27px; text-align: center; letter-spacing: -.2px; }
.scrollbar { width: 15px; background: #2c2c2c; display: flex; flex-direction: column; align-items: center; padding: 6px 0 7px; }
.thumb { width: 9px; height: 304px; border-radius: 5px; background: #9f9f9f; margin: 469px 0 auto; }

/* taskbar */
.taskbar { height: 40px; background: #1c1c1c; display: flex; color: #fff; white-space: nowrap; }
.start { width: 48px; display: grid; place-items: center; }
.search { width: 288px; background: #f1f1f1; border: 1px solid #bcbcbc; color: #333; font-size: 14.500px; letter-spacing: -.5px; display: flex; align-items: center; gap: 10px; padding: 2px 0 0 11px; }
.apps-row { display: flex; margin-left: 2.300px; }
.app { width: 49.050px; height: 40px; display: grid; place-items: center; position: relative; }
.app svg { width: 24px; height: 24px; }
.run { background: linear-gradient(#76b9ed, #76b9ed) 50% 100% / 40px 2px no-repeat; }
.current { background: linear-gradient(#76b9ed, #76b9ed) 50% 100% / 48px 2px no-repeat, #4a4a4a; }
.stacked { background: linear-gradient(90deg, #76b9ed 31px, #315777 31px, #5285ab 33px) 50% 100% / 40px 2px no-repeat; }
.app small { position: absolute; left: 22px; top: 22px; font: italic 3.500px/8px "Open Sans", sans-serif; color: #bbb; }
.tray { flex: 1; display: flex; align-items: center; justify-content: flex-end; }
.news { width: 22px; height: 17px; margin-right: 9px; }
.headline { width: 141px; font-size: 14px; letter-spacing: -.3px; margin-right: 24px; }
.up { width: 14px; height: 8px; margin-right: 9px; }
.net { width: 17px; height: 14px; margin-right: 7px; }
.vol { width: 18px; height: 14px; margin-right: 8px; }
.clock { width: 60px; font-size: 12px; line-height: 18px; text-align: center; margin-right: 17px; letter-spacing: -.4px; }
.note { width: 17px; height: 17px; margin-right: 19px; }
.peek { width: 1px; height: 40px; background: #686868; margin-right: 4px; }
```
